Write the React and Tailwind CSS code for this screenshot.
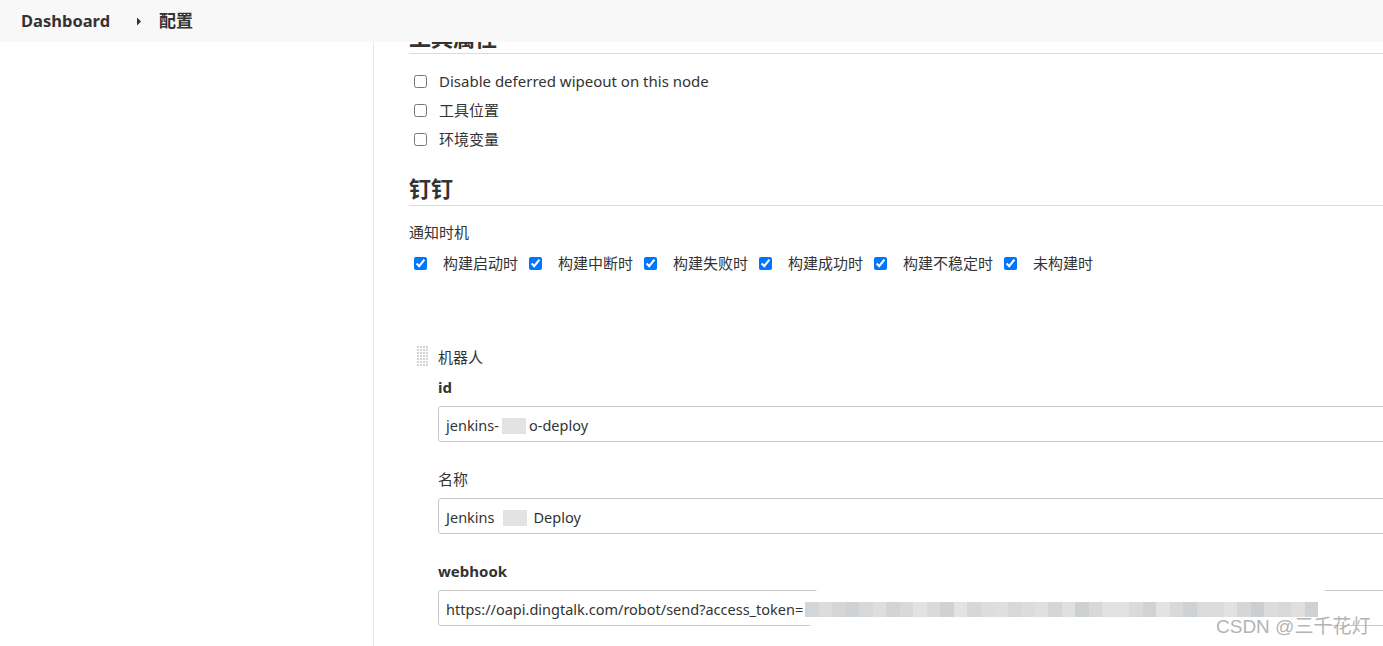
import React from 'react';

const FONT = { fontFamily: '"Noto Sans", "Noto Sans CJK SC", sans-serif' };

const tokenShades = [
  '#d3d6d8', '#dcdcdc', '#d6d6d6', '#cfd2d4', '#d8d8d8', '#dedede', '#d2d4d6', '#d9d9d9',
  '#e2e2e2', '#dadada', '#cfd1d3', '#e5e3e1', '#d5d7d9', '#dddddd', '#e0dfdd', '#d6d8da',
  '#dcdcdc', '#e1e0de', '#d4d6d8', '#dfe1df', '#cdd0d2', '#d8d8d8', '#e2e1df', '#e3e1df',
  '#d9dbdb', '#d1d3d3', '#e3e3e1', '#d7d9db', '#cfd2d4', '#dadcdc', '#dcdcdc', '#e2e2e0',
  '#d4d6d8', '#cbced0', '#dcdcdc', '#d6d8da', '#e0dfdd', '#cfd2d4',
];

const Blur = ({ w = 34 }) => (
  <span className="inline-flex items-center justify-center rounded-full bg-white h-[26px] align-middle" style={{ width: w }}>
    <span className="inline-block h-[16px] w-[24px] bg-[#e3e3e3]" />
  </span>
);

const Check = ({ label }) => (
  <label className="flex items-center h-[20px]">
    <input type="checkbox" className="m-0 ml-[5px] w-[13px] h-[13px]" />
    <span className="ml-[12px] text-[15px] text-[#333] leading-[20px]">{label}</span>
  </label>
);

const Field = ({ label, bold, children }) => (
  <div>
    <div className={`text-[15px] text-[#333] ${bold ? 'font-bold' : ''} h-[20px] leading-[20px]`}>{label}</div>
    <div className="mt-[9px] h-[36px] w-[1000px] border border-[#c8c8c8] rounded-[3px] bg-white flex items-center pl-[7px] pt-[3px] text-[14.5px] text-[#333] whitespace-nowrap">
      {children}
    </div>
  </div>
);

export default function App() {
  const notify = ['构建启动时', '构建中断时', '构建失败时', '构建成功时', '构建不稳定时', '未构建时'];
  return (
    <div className="relative w-[1383px] h-[646px] overflow-hidden bg-white" style={FONT}>
      {/* top breadcrumb bar */}
      <div className="absolute top-0 left-0 right-0 h-[42px] bg-[#f8f8f8] z-10 flex items-center pl-[21px]">
        <span className="text-[16.5px] font-bold text-[#333]">Dashboard</span>
        <svg className="ml-[26px]" width="6" height="9" viewBox="0 0 6 9">
          <path d="M1 0.5 L5 4.5 L1 8.5 Z" fill="#333" />
        </svg>
        <span className="ml-[17px] text-[17px] font-bold text-[#333]">配置</span>
      </div>

      <div className="flex h-full">
        <div className="w-[374px] shrink-0 border-r border-[#e6e6e6]" />
        <div className="flex-1 pl-[35px] pt-[24px]">
          <div className="border-b border-[#dcdcdc] pb-[3px]">
            <h2 className="text-[22px] font-bold text-[#333] leading-[26px]">工具属性</h2>
          </div>
          <div className="mt-[17px] flex flex-col gap-[9px]">
            <Check label="Disable deferred wipeout on this node" />
            <Check label="工具位置" />
            <Check label="环境变量" />
          </div>

          <div className="mt-[24px] border-b border-[#dcdcdc] pb-[2px]">
            <h2 className="text-[22px] font-bold text-[#333] leading-[30px]">钉钉</h2>
          </div>
          <div className="mt-[16px] text-[15px] text-[#333] leading-[20px]">通知时机</div>
          <div className="mt-[11px] flex items-center">
            {notify.map((n, i) => (
              <label key={n} className="flex items-center" style={{ width: i === 4 ? 130 : 115 }}>
                <input type="checkbox" defaultChecked className="m-0 ml-[5px] w-[13px] h-[13px]" />
                <span className="ml-[16px] text-[15px] text-[#333] leading-[20px]">{n}</span>
              </label>
            ))}
          </div>

          <div className="mt-[77px] flex items-start">
            <svg className="mt-[-4px] ml-[8px] shrink-0" width="12" height="21" viewBox="0 0 12 21">
              {Array.from({ length: 7 }).map((_, r) =>
                Array.from({ length: 4 }).map((_, c) => (
                  <rect key={`${r}-${c}`} x={c * 3} y={r * 3} width="2" height="2" fill="#d4d4d4" />
                ))
              )}
            </svg>
            <div className="ml-[9px]">
              <div className="text-[15px] text-[#333] leading-[20px] mt-[-3px]">机器人</div>
              <div className="mt-[10px] flex flex-col gap-[27px]">
                <Field label="id" bold>
                  <span>jenkins-</span>
                  <Blur w={30} />
                  <span>o-deploy</span>
                </Field>
                <Field label="名称">
                  <span>Jenkins</span>
                  <span className="ml-[3px]"><Blur w={34} /></span>
                  <span className="ml-[2px]">Deploy</span>
                </Field>
                <Field label="webhook" bold>
                  <span>https://oapi.dingtalk.com/robot/send?access_token=</span>
                  <span className="relative inline-flex items-center h-[42px] -my-[4px] bg-white rounded-full pl-[2px] pr-[20px]">
                    {tokenShades.map((c, i) => (
                      <span key={i} className="inline-block h-[15px] w-[13.5px]" style={{ background: c }} />
                    ))}
                  </span>
                </Field>
              </div>
            </div>
          </div>
        </div>
      </div>

      <div
        className="absolute left-[1216px] top-[614px] text-[19px] text-[#b4b4b4] leading-[26px] whitespace-nowrap z-20"
        style={{ fontFamily: '"Liberation Sans", "Noto Sans CJK SC", sans-serif' }}
      >
        CSDN @三千花灯
      </div>
    </div>
  );
}
